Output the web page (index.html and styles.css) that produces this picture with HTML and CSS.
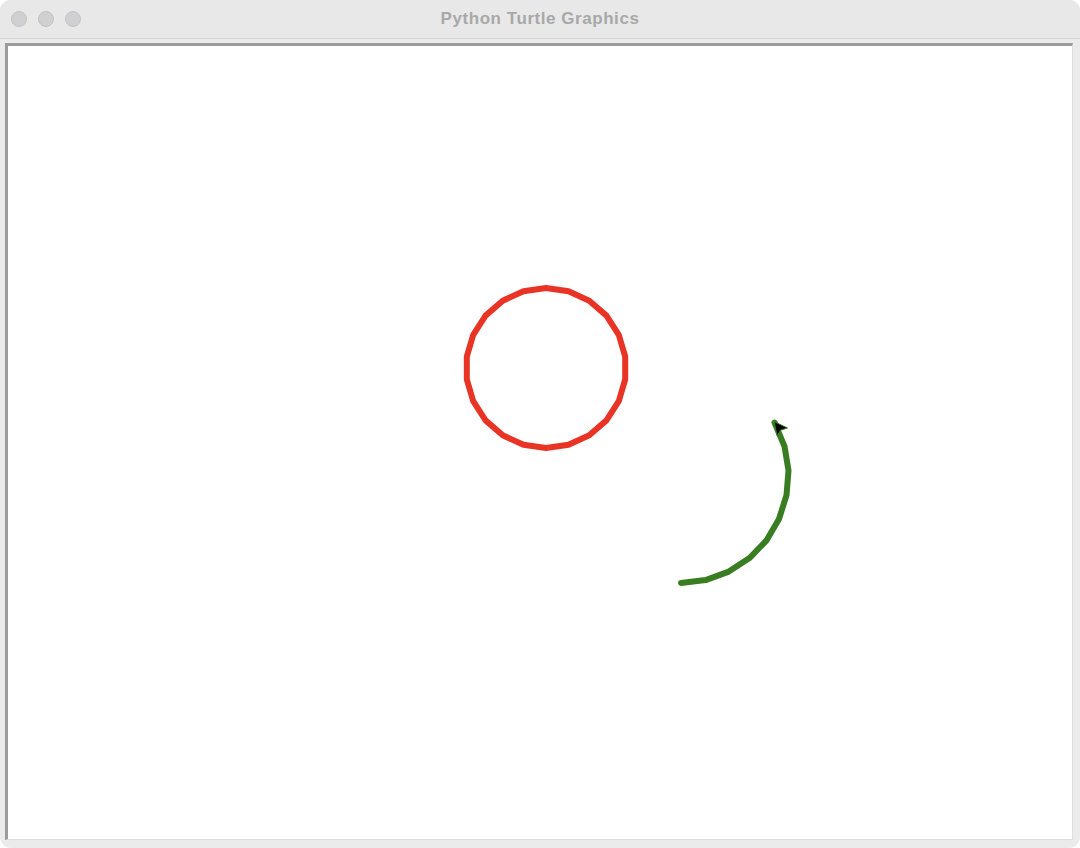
FILE: index.html
```html
<!DOCTYPE html>
<html lang="en">
<head>
<meta charset="utf-8">
<title>Python Turtle Graphics</title>
<link rel="stylesheet" href="styles.css">
</head>
<body>
<div class="window">
  <div class="titlebar">
    <div class="lights">
      <span class="light"></span>
      <span class="light"></span>
      <span class="light"></span>
    </div>
    <div class="title">Python Turtle Graphics</div>
    <div class="spacer"></div>
  </div>
  <div class="body">
    <div class="canvas">
      <svg class="drawing" viewBox="8 46 1064 793" preserveAspectRatio="none" xmlns="http://www.w3.org/2000/svg">
        <polygon class="red-circle" points="546,448 568.54,444.76 589.25,435.3 606.46,420.39 618.77,401.23 625.19,379.38 625.19,356.62 618.77,334.77 606.46,315.61 589.25,300.7 568.54,291.24 546,288 523.46,291.24 502.75,300.7 485.54,315.61 473.23,334.77 466.81,356.62 466.81,379.38 473.23,401.23 485.54,420.39 502.75,435.3 523.46,444.76"/>
        <polyline class="green-arc" points="681,583 705.6,580.1 728.8,571.6 749.5,558.1 766.6,540.3 779,519 786.5,495.2 788.5,470.6 784.5,446.3 774.5,422.5"/>
        <polygon class="arrow" points="774,421.5 787.5,428 780.5,430.2 777.2,435.8"/>
      </svg>
    </div>
  </div>
</div>
</body>
</html>
```

FILE: styles.css
```css
html, body {
  margin: 0;
  padding: 0;
  background: #ffffff;
}

.window {
  width: 1080px;
  height: 848px;
  box-sizing: border-box;
  background: #ebebeb;
  border-radius: 11px;
  overflow: hidden;
  display: flex;
  flex-direction: column;
}

.titlebar {
  height: 38px;
  flex: 0 0 38px;
  background: #e8e8e9;
  border-bottom: 1px solid #d4d4d5;
  display: grid;
  grid-template-columns: 1fr auto 1fr;
  align-items: center;
}

.lights {
  display: flex;
  gap: 11px;
  padding-left: 10.5px;
}

.light {
  width: 16px;
  height: 16px;
  box-sizing: border-box;
  border-radius: 50%;
  background: #d0d0d2;
  border: 1px solid #c2c2c4;
  margin-top: 0px;
}

.title {
  font-family: "Liberation Sans", Arial, sans-serif;
  font-weight: bold;
  font-size: 17px;
  color: #a8a8a8;
  letter-spacing: 0.55px;
}

.body {
  flex: 1 1 auto;
  padding: 4px 7px 8px 5px;
  display: flex;
}

.canvas {
  flex: 1 1 auto;
  height: 797px;
  box-sizing: border-box;
  background: #ffffff;
  border-top: 3px solid #9c9c9c;
  border-left: 3px solid #9c9c9c;
  border-right: 1px solid #dedede;
  border-bottom: 1px solid #dedede;
}

.drawing {
  display: block;
  width: 100%;
  height: 100%;
}

.red-circle {
  fill: none;
  stroke: #e93425;
  stroke-width: 6;
  stroke-linejoin: round;
}

.green-arc {
  fill: none;
  stroke: #387d22;
  stroke-width: 6;
  stroke-linejoin: round;
  stroke-linecap: round;
}

.arrow {
  fill: #000000;
  stroke: #387d22;
  stroke-width: 1;
  stroke-linejoin: round;
}
```
